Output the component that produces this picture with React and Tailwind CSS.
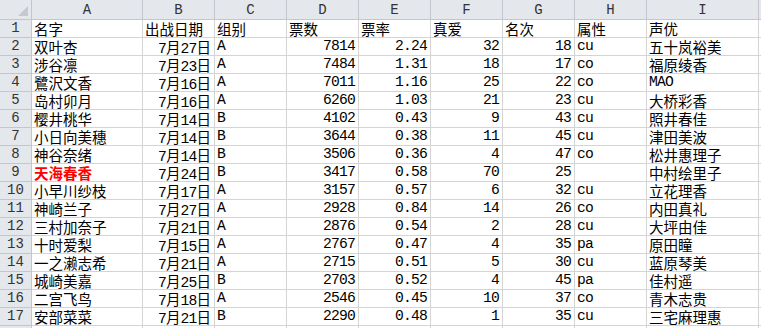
import React from "react";

const rows = [
  ["双叶杏", "7月27日", "A", "7814", "2.24", "32", "18", "cu", "五十岚裕美"],
  ["涉谷凛", "7月23日", "A", "7484", "1.31", "18", "17", "co", "福原绫香"],
  ["鷺沢文香", "7月16日", "A", "7011", "1.16", "25", "22", "co", "MAO"],
  ["岛村卯月", "7月16日", "A", "6260", "1.03", "21", "23", "cu", "大桥彩香"],
  ["樱井桃华", "7月14日", "B", "4102", "0.43", "9", "43", "cu", "照井春佳"],
  ["小日向美穗", "7月14日", "B", "3644", "0.38", "11", "45", "cu", "津田美波"],
  ["神谷奈绪", "7月14日", "B", "3506", "0.36", "4", "47", "co", "松井惠理子"],
  ["天海春香", "7月24日", "B", "3417", "0.58", "70", "25", "", "中村绘里子"],
  ["小早川纱枝", "7月17日", "A", "3157", "0.57", "6", "32", "cu", "立花理香"],
  ["神崎兰子", "7月27日", "A", "2928", "0.84", "14", "26", "co", "内田真礼"],
  ["三村加奈子", "7月21日", "A", "2876", "0.54", "2", "28", "cu", "大坪由佳"],
  ["十时爱梨", "7月15日", "A", "2767", "0.47", "4", "35", "pa", "原田瞳"],
  ["一之濑志希", "7月21日", "A", "2715", "0.51", "5", "30", "cu", "蓝原琴美"],
  ["城崎美嘉", "7月25日", "B", "2703", "0.52", "4", "45", "pa", "佳村遥"],
  ["二宫飞鸟", "7月18日", "A", "2546", "0.45", "10", "37", "co", "青木志贵"],
  ["安部菜菜", "7月21日", "B", "2290", "0.48", "1", "35", "cu", "三宅麻理惠"],
];

const headers = ["名字", "出战日期", "组别", "票数", "票率", "真爱", "名次", "属性", "声优"];
const letters = ["A", "B", "C", "D", "E", "F", "G", "H", "I"];

// columns holding right aligned values (dates and numbers)
const rightCols = [1, 3, 4, 5, 6];

const gridCols =
  "grid grid-cols-[32px_111px_72px_72px_72px_72px_72px_72px_72px_112px_1fr]";

const cjk = "font-['Noto_Sans_CJK_SC',sans-serif] text-[14.5px] leading-[17px]";
const mono =
  "font-['Liberation_Mono',monospace] text-[14.67px] tracking-[-0.8px] leading-[17px]";

// split a value into ascii / cjk runs so each gets its own font
const splitRuns = (text) => text.match(/[\x00-\x7f]+|[^\x00-\x7f]+/g) || [];

const Cell = ({ value, right, red }) => (
  <div
    className={`h-[18px] border-r border-b border-[#d4d4d4] flex items-baseline overflow-hidden whitespace-nowrap ${
      right ? "justify-end pr-[3px]" : "pl-[2px]"
    } ${red ? "text-[#ff0000] font-bold" : "text-black"}`}
  >
    {splitRuns(value).map((run, i) => (
      <span key={i} className={/^[\x00-\x7f]+$/.test(run) ? mono : cjk}>
        {run}
      </span>
    ))}
  </div>
);

const RowHead = ({ n }) => (
  <div className="h-[18px] bg-[#e4e7eb] border-r border-b border-[#c3c7cd] flex items-end justify-center leading-[17px] text-[#333] font-['Liberation_Mono',monospace] text-[14px]">
    {n}
  </div>
);

const App = () => {
  return (
    <div className="w-[761px] h-[328px] overflow-hidden bg-white">
      {/* column letters */}
      <div className={gridCols}>
        <div className="h-[20px] bg-[#e4e7eb] border-r border-b border-[#c3c7cd] relative">
          <svg className="absolute right-[3px] bottom-[3px]" width="10" height="10">
            <polygon points="10,0 10,10 0,10" fill="#c5c9cf" />
          </svg>
        </div>
        {letters.map((l) => (
          <div
            key={l}
            className="h-[20px] bg-[#e4e7eb] border-r border-b border-[#c3c7cd] flex items-end justify-center leading-[18px] text-[#333] font-['Liberation_Mono',monospace] text-[14px]"
          >
            {l}
          </div>
        ))}
        <div className="h-[20px] bg-[#e4e7eb] border-b border-[#c3c7cd]" />
      </div>

      {/* header row */}
      <div className={gridCols}>
        <RowHead n={1} />
        {headers.map((h) => (
          <Cell key={h} value={h} />
        ))}
        <div className="h-[18px] border-b border-[#d4d4d4]" />
      </div>

      {rows.map((r, idx) => (
        <div key={idx} className={gridCols}>
          <RowHead n={idx + 2} />
          {r.map((v, c) => (
            <Cell
              key={c}
              value={v}
              right={rightCols.includes(c)}
              red={idx === 7 && c === 0}
            />
          ))}
          <div className="h-[18px] border-b border-[#d4d4d4]" />
        </div>
      ))}

      <div className={gridCols}>
        <RowHead n={18} />
        {letters.map((l) => (
          <div key={l} className="h-[18px] border-r border-[#d4d4d4]" />
        ))}
      </div>
    </div>
  );
};

export default App;
